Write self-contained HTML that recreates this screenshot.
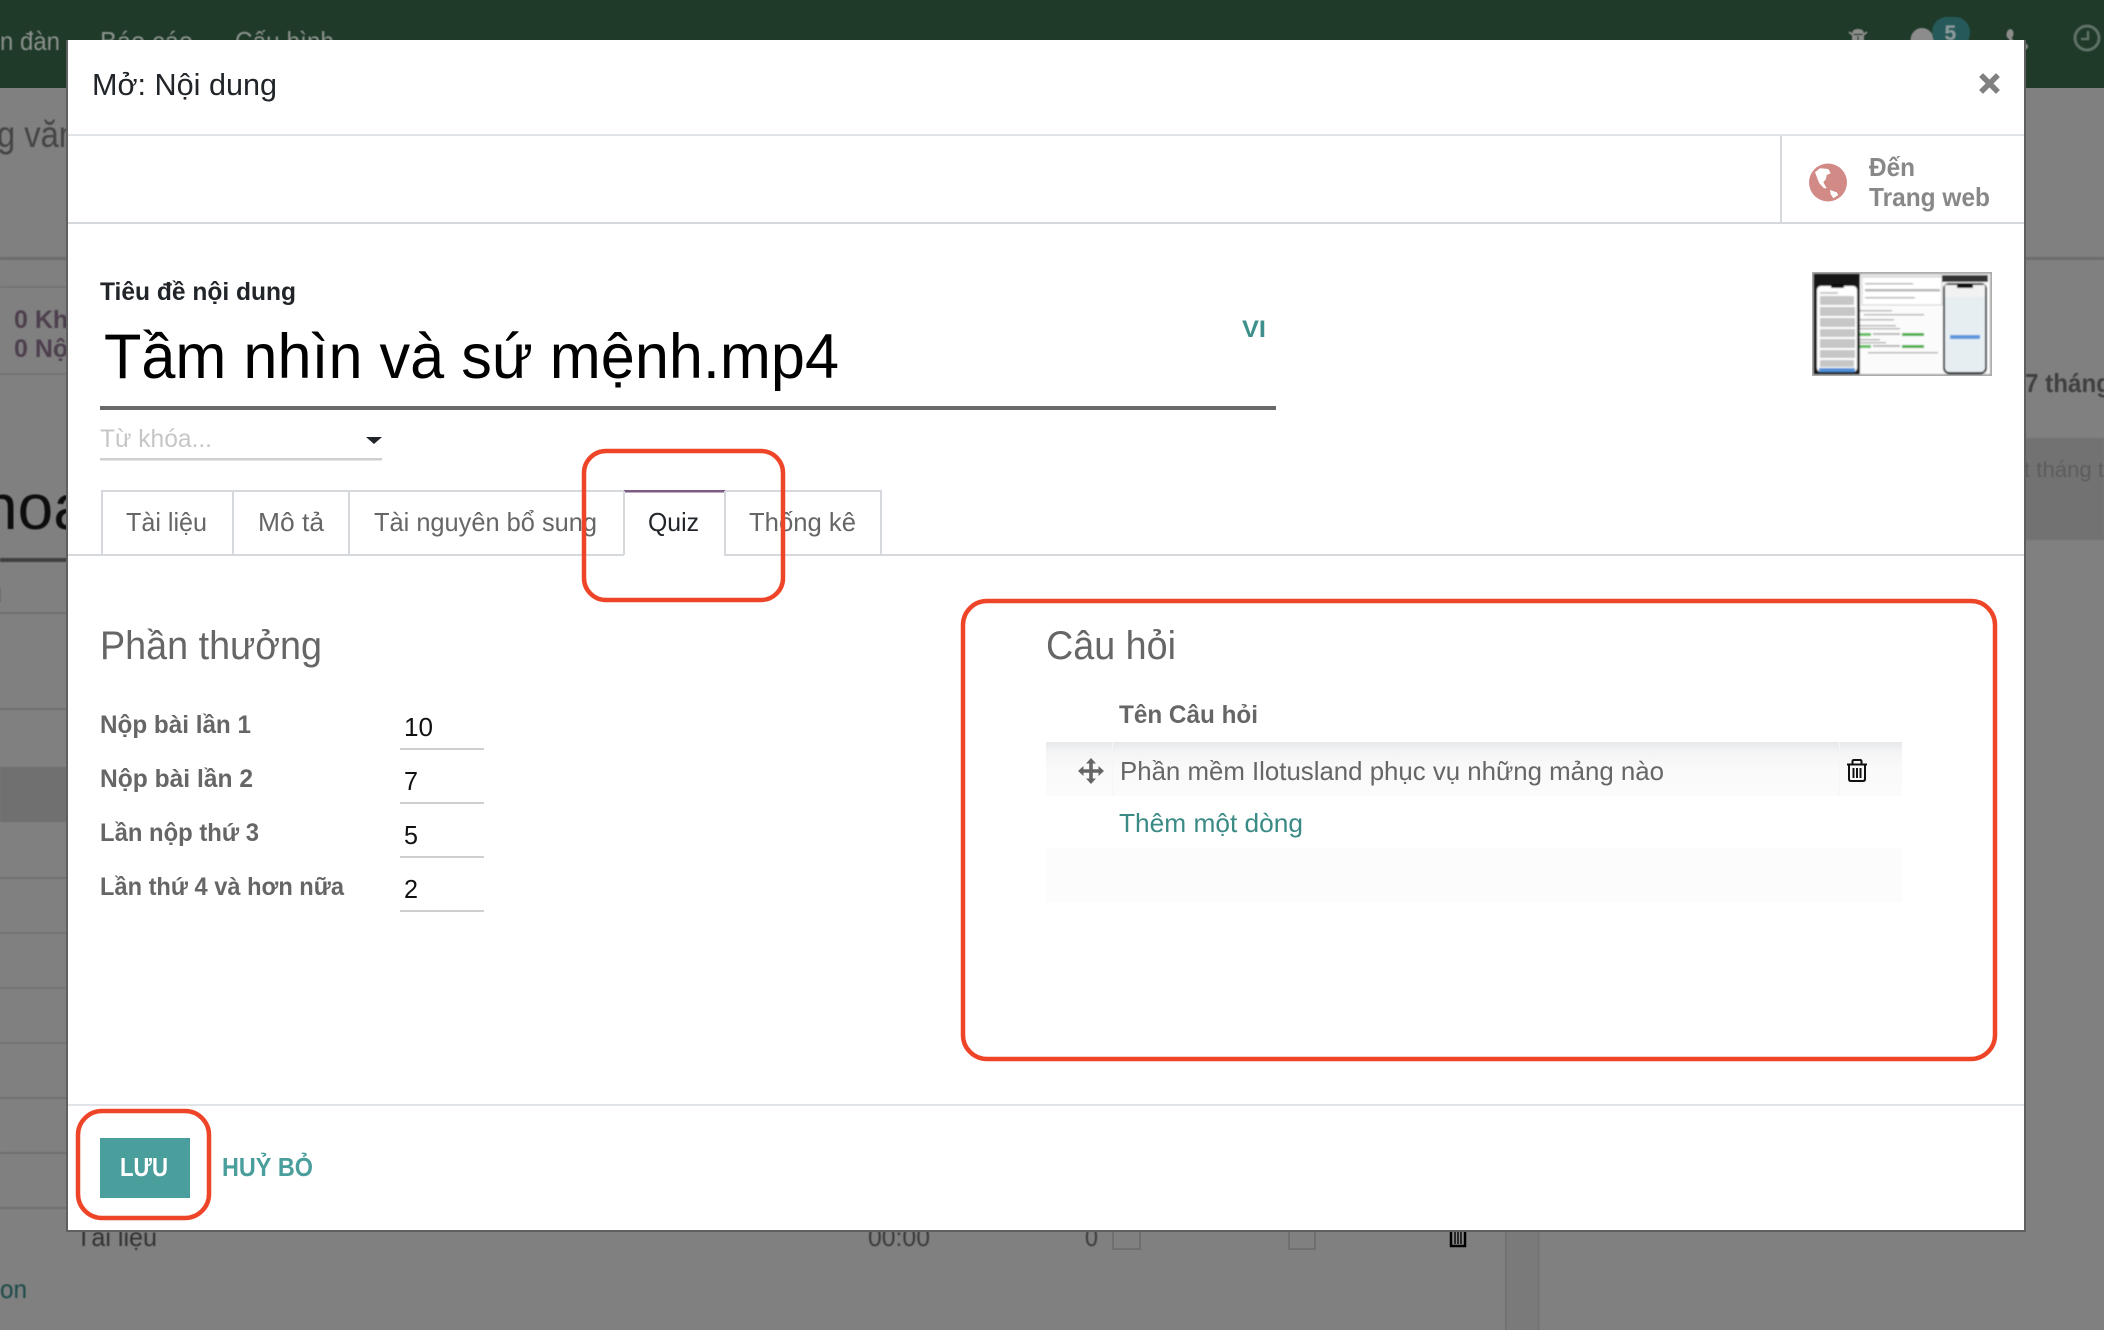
<!DOCTYPE html>
<html lang="vi"><head><meta charset="utf-8"><title>Mở: Nội dung</title>
<style>
html,body{margin:0;padding:0;width:2104px;height:1330px;overflow:hidden;background:#808080}
svg{display:block;position:absolute;left:0;top:0}
text{font-family:"Liberation Sans","Noto Sans CJK SC",sans-serif}
.b{font-weight:700}
</style></head><body>
<svg width="2104" height="1330" viewBox="0 0 2104 1330" xmlns="http://www.w3.org/2000/svg">
<defs>
<linearGradient id="rowg" x1="0" y1="0" x2="0" y2="1"><stop offset="0" stop-color="#e6e8ea"/><stop offset=".18" stop-color="#f4f4f5"/><stop offset=".5" stop-color="#fafafa"/><stop offset="1" stop-color="#fbfbfb"/></linearGradient>
<filter id="bl" x="-5%" y="-5%" width="110%" height="110%"><feGaussianBlur stdDeviation="0.5"/></filter>
<filter id="bl2" x="-5%" y="-5%" width="110%" height="110%"><feGaussianBlur stdDeviation="0.9"/></filter>
</defs>

<!-- dimmed backdrop -->
<rect width="2104" height="1330" fill="#808080"/>
<rect width="2104" height="88" fill="#1f3a28"/>
<g filter="url(#bl)">
<text x="0" y="50" font-size="26" fill="#8b918d" textLength="60" lengthAdjust="spacingAndGlyphs">n đàn</text>
<text x="100" y="50" font-size="26" fill="#8b918d" textLength="93" lengthAdjust="spacingAndGlyphs">Báo cáo</text>
<text x="235" y="50" font-size="26" fill="#8b918d" textLength="99" lengthAdjust="spacingAndGlyphs">Cấu hình</text>
<!-- top right icons -->
<path d="M1852 34Q1852 29 1858 29Q1864 29 1864 34Z" fill="#8c8c8c"/>
<path d="M1849 32l5 4M1867 32l-5 4" stroke="#8c8c8c" stroke-width="1.8" fill="none"/>
<path d="M1852 35H1864V44H1852Z" fill="#8c8c8c"/>
<path d="M1858 36V44" stroke="#1f3a28" stroke-width="1.2"/>
<ellipse cx="1922" cy="40" rx="11.5" ry="12" fill="#8c8c8c"/>
<rect x="1932" y="17" width="38" height="31" rx="15" fill="#265a5a"/>
<text x="1944.5" y="40" font-size="21" class="b" fill="#8a9a9a">5</text>
<ellipse cx="2010" cy="34" rx="3.5" ry="5" fill="#8c8c8c" transform="rotate(10 2010 34)"/>
<path d="M2010 38Q2013 44 2018 44" stroke="#8c8c8c" stroke-width="3" fill="none"/>
<circle cx="2025" cy="46.5" r="3" fill="#8c8c8c"/>
<circle cx="2087" cy="38" r="12" fill="none" stroke="#5f7166" stroke-width="3"/>
<path d="M2088 31v8h-7" fill="none" stroke="#5f7166" stroke-width="2.5"/>
</g>

<g filter="url(#bl)">
<text x="-3" y="147" font-size="37" fill="#444" textLength="80" lengthAdjust="spacingAndGlyphs">g văn</text>
<rect x="0" y="257" width="68" height="3" fill="#6c6c6c"/>
<rect x="0" y="286" width="68" height="2" fill="#737373"/>
<rect x="0" y="373" width="68" height="2" fill="#737373"/>
<text x="14" y="328" font-size="25" class="b" fill="#4d414d">0 Kh</text>
<text x="14" y="357" font-size="25" class="b" fill="#4d414d">0 Nộ</text>
<text x="-18" y="529" font-size="64" fill="#111">hoa</text>
<rect x="0" y="558" width="68" height="4" fill="#404040"/>
<text x="-12" y="602" font-size="26" fill="#666">u</text>
<rect x="0" y="612" width="68" height="2" fill="#707070"/>
<rect x="0" y="708" width="68" height="2" fill="#707070"/>
<rect x="0" y="767" width="68" height="55" fill="#6f6f6f"/>
<rect x="0" y="877" width="68" height="2" fill="#707070"/>
<rect x="0" y="932" width="68" height="2" fill="#747474"/>
<rect x="0" y="987" width="68" height="2" fill="#747474"/>
<rect x="0" y="1042" width="68" height="2" fill="#747474"/>
<rect x="0" y="1097" width="68" height="2" fill="#707070"/>
<rect x="0" y="1152" width="68" height="2" fill="#707070"/>
<rect x="0" y="1207" width="68" height="2" fill="#707070"/>
<!-- right of modal -->
<rect x="2024" y="257" width="80" height="3" fill="#6c6c6c"/>
<text x="2025" y="392" font-size="26" class="b" fill="#404040" textLength="86" lengthAdjust="spacingAndGlyphs">7 tháng</text>
<rect x="2024" y="438" width="80" height="102" fill="#727272"/>
<text x="2024" y="477" font-size="22" fill="#5c5c5c" textLength="80" lengthAdjust="spacingAndGlyphs">t tháng t</text>
<!-- below modal -->
<text x="76" y="1246" font-size="26" fill="#333" textLength="81" lengthAdjust="spacingAndGlyphs">Tài liệu</text>
<text x="868" y="1246" font-size="26" fill="#3a3a3a" textLength="62" lengthAdjust="spacingAndGlyphs">00:00</text>
<text x="1085" y="1246" font-size="26" fill="#3a3a3a" textLength="13" lengthAdjust="spacingAndGlyphs">0</text>
<text x="0" y="1298" font-size="26" fill="#1c4a48" textLength="27" lengthAdjust="spacingAndGlyphs">on</text>
</g>
<rect x="1113" y="1225" width="27" height="24" fill="#808080" stroke="#6f6f6f" stroke-width="2"/>
<rect x="1289" y="1225" width="26" height="24" fill="#808080" stroke="#6f6f6f" stroke-width="2"/>
<rect x="1451" y="1228" width="14" height="18" fill="#8a8a8a" stroke="#000" stroke-width="2.5"/>
<path d="M1455 1232v12M1458 1232v12M1461 1232v12" stroke="#000" stroke-width="1.4"/>
<rect x="1505" y="1230" width="34" height="100" fill="#7a7a7a"/>
<rect x="1505" y="1230" width="1.5" height="100" fill="#6f6f6f"/>
<rect x="1538" y="1230" width="1.5" height="100" fill="#727272"/>

<!-- modal -->
<rect x="66" y="40" width="1960" height="1192" fill="#5f5f5f"/>
<rect x="68" y="40" width="1956" height="1190" fill="#fff"/>

<text x="92" y="95" font-size="31" fill="#212529" textLength="185" lengthAdjust="spacingAndGlyphs">Mở: Nội dung</text>
<path d="M1983 77l13 13M1996 77l-13 13" stroke="#808080" stroke-width="5.5" stroke-linecap="square" fill="none"/>
<rect x="68" y="134" width="1956" height="2" fill="#e0e3e7"/>
<rect x="68" y="222" width="1956" height="2" fill="#d5d9de"/>
<rect x="1780" y="136" width="2" height="86" fill="#d5d9de"/>

<!-- globe -->
<circle cx="1828" cy="182.5" r="19" fill="#d18a86"/>
<path d="M1815 172.3L1820 168.3L1828.3 169L1830.7 173.3L1826.7 175L1826 179L1823.3 182.3L1826.7 188.3L1824 188.3L1819.3 183.3L1816.7 176.7ZM1830 190L1836.7 192.3L1838.3 195L1833.3 198.3L1830.7 194.3Z" fill="#fff"/>

<text x="1869" y="176" font-size="26" class="b" fill="#888" textLength="46" lengthAdjust="spacingAndGlyphs">Đến</text>
<text x="1869" y="206" font-size="26" class="b" fill="#888" textLength="121" lengthAdjust="spacingAndGlyphs">Trang web</text>

<!-- title -->
<text x="100" y="300" font-size="25" class="b" fill="#212529" textLength="196" lengthAdjust="spacingAndGlyphs">Tiêu đề nội dung</text>
<text x="104" y="378" font-size="63" fill="#000" textLength="735" lengthAdjust="spacingAndGlyphs">Tầm nhìn và sứ mệnh.mp4</text>
<text x="1242" y="337" font-size="24" class="b" fill="#3f908c" textLength="24" lengthAdjust="spacingAndGlyphs">VI</text>
<rect x="100" y="406" width="1176" height="4" fill="#6a6a6a"/>

<!-- thumbnail -->
<rect x="1812" y="272" width="180" height="104" fill="#aaa"/>
<g filter="url(#bl2)">
<rect x="1814" y="274" width="176" height="100" fill="#fbfbfb"/>
<rect x="1814" y="274" width="46" height="100" fill="#161616"/>
<rect x="1817" y="286" width="40" height="86" rx="4" fill="#fff"/>
<rect x="1831" y="284" width="13" height="4" fill="#111"/>
<g fill="#c6c6c6">
<rect x="1820" y="292" width="18" height="2"/><rect x="1820" y="296" width="34" height="9"/><rect x="1820" y="307" width="35" height="9"/><rect x="1820" y="318" width="35" height="9"/><rect x="1820" y="329" width="35" height="8"/><rect x="1820" y="339" width="35" height="9"/><rect x="1820" y="350" width="35" height="8"/><rect x="1820" y="360" width="34" height="7"/>
</g>
<rect x="1819" y="368" width="36" height="4" fill="#4f8fd8"/>
<rect x="1860" y="274" width="82" height="3" fill="#e5e5e5"/>
<rect x="1862" y="277" width="80" height="28" fill="#fff" stroke="#ccc"/>
<g fill="#b5b5b5">
<rect x="1865" y="283" width="48" height="1.5"/><rect x="1865" y="289" width="75" height="2.5"/><rect x="1865" y="297" width="50" height="1.5"/>
<rect x="1860" y="310" width="32" height="1.5"/><rect x="1864" y="314" width="60" height="1.5"/><rect x="1860" y="319" width="34" height="1.5"/><rect x="1860" y="325" width="36" height="1.5"/><rect x="1860" y="328" width="40" height="1.5"/>
<rect x="1873" y="333" width="27" height="2"/><rect x="1873" y="345" width="27" height="2"/>
<rect x="1860" y="339" width="20" height="1.5"/><rect x="1860" y="342" width="26" height="1.5"/><rect x="1868" y="352" width="70" height="1.5"/>
</g>
<rect x="1860" y="333" width="11" height="3" fill="#5cbf5c"/>
<rect x="1902" y="333" width="22" height="3" fill="#3fae3a"/>
<rect x="1860" y="345" width="11" height="3" fill="#5cbf5c"/>
<rect x="1902" y="345" width="22" height="3" fill="#3fae3a"/>
<rect x="1942" y="275" width="46" height="7" fill="#333"/>
<rect x="1943" y="283" width="44" height="91" rx="6" fill="#1d1d1d"/>
<rect x="1945" y="285" width="40" height="87" rx="4" fill="#e6eef2"/>
<rect x="1945" y="285" width="40" height="12" fill="#f2f2f2"/>
<rect x="1957" y="284" width="16" height="4" fill="#111"/>
<rect x="1950" y="335" width="30" height="4" fill="#5b96dc"/>
</g>

<!-- tags -->
<text x="100" y="447" font-size="25" fill="#c6c6c6" textLength="112" lengthAdjust="spacingAndGlyphs">Từ khóa...</text>
<path d="M366 437h16l-8 7z" fill="#212529"/>
<rect x="100" y="458" width="282" height="2.5" fill="#cfcfcf"/>

<!-- tabs -->
<g fill="none" stroke="#d5d9de" stroke-width="2">
<path d="M68 555H624M725 555H2024"/>
<path d="M102 555V491H881V555"/>
<path d="M233 491V555M349 491V555M624 491V555M725 491V555"/>
</g>
<rect x="625" y="490" width="100" height="66" fill="#fff"/>
<rect x="624" y="490" width="101" height="2.5" fill="#7c5b85"/>
<path d="M624 491V555M725 491V556" stroke="#d5d9de" stroke-width="2"/>
<text x="126" y="531" font-size="26" fill="#666" textLength="81" lengthAdjust="spacingAndGlyphs">Tài liệu</text>
<text x="258" y="531" font-size="26" fill="#666" textLength="66" lengthAdjust="spacingAndGlyphs">Mô tả</text>
<text x="374" y="531" font-size="26" fill="#666" textLength="223" lengthAdjust="spacingAndGlyphs">Tài nguyên bổ sung</text>
<text x="648" y="531" font-size="26" fill="#212529" textLength="51" lengthAdjust="spacingAndGlyphs">Quiz</text>
<text x="749" y="531" font-size="26" fill="#666" textLength="107" lengthAdjust="spacingAndGlyphs">Thống kê</text>

<!-- left group -->
<text x="100" y="659" font-size="40" fill="#666" textLength="222" lengthAdjust="spacingAndGlyphs">Phần thưởng</text>
<g class="b" font-weight="700" font-size="25" fill="#666">
<text x="100" y="733" textLength="151" lengthAdjust="spacingAndGlyphs">Nộp bài lần 1</text>
<text x="100" y="787" textLength="153" lengthAdjust="spacingAndGlyphs">Nộp bài lần 2</text>
<text x="100" y="841" textLength="159" lengthAdjust="spacingAndGlyphs">Lần nộp thứ 3</text>
<text x="100" y="895" textLength="244" lengthAdjust="spacingAndGlyphs">Lần thứ 4 và hơn nữa</text>
</g>
<g font-size="26" fill="#111">
<text x="404" y="736" textLength="29" lengthAdjust="spacingAndGlyphs">10</text>
<text x="404" y="790" textLength="14" lengthAdjust="spacingAndGlyphs">7</text>
<text x="404" y="844" textLength="14" lengthAdjust="spacingAndGlyphs">5</text>
<text x="404" y="898" textLength="14" lengthAdjust="spacingAndGlyphs">2</text>
</g>
<g fill="#cfcfcf">
<rect x="400" y="748" width="84" height="2"/><rect x="400" y="802" width="84" height="2"/><rect x="400" y="856" width="84" height="2"/><rect x="400" y="910" width="84" height="2"/>
</g>

<!-- right group -->
<text x="1046" y="659" font-size="40" fill="#666" textLength="130" lengthAdjust="spacingAndGlyphs">Câu hỏi</text>
<text x="1119" y="723" font-size="25" class="b" fill="#666" textLength="139" lengthAdjust="spacingAndGlyphs">Tên Câu hỏi</text>
<rect x="1046" y="742" width="856" height="54" fill="url(#rowg)"/>
<rect x="1112" y="742" width="1" height="54" fill="#f6f6f6"/>
<rect x="1839" y="742" width="1" height="54" fill="#f6f6f6"/>
<path transform="translate(1091 771)" d="M0-13L5-7.5H1.8V-1.8H7.5V-5L13 0L7.5 5V1.8H1.8V7.5H5L0 13L-5 7.5H-1.8V1.8H-7.5V5L-13 0L-7.5-5V-1.8H-1.8V-7.5H-5Z" fill="#666"/>
<text x="1120" y="780" font-size="26" fill="#666" textLength="544" lengthAdjust="spacingAndGlyphs">Phần mềm Ilotusland phục vụ những mảng nào</text>
<g fill="none" stroke="#111" stroke-width="2">
<path d="M1847 764.5H1867"/>
<path d="M1852.5 764V761.5Q1852.5 760 1854 760H1860Q1861.5 760 1861.5 761.5V764"/>
<path d="M1849 765V779Q1849 781 1851 781H1863Q1865 781 1865 779V765"/>
<path d="M1853.5 768V778M1857 768V778M1860.5 768V778"/>
</g>
<text x="1119" y="832" font-size="26" fill="#3a8a85" textLength="184" lengthAdjust="spacingAndGlyphs">Thêm một dòng</text>
<rect x="1046" y="848" width="856" height="54" fill="#fcfcfc"/>

<!-- footer -->
<rect x="68" y="1104" width="1956" height="2" fill="#e0e3e7"/>
<rect x="100" y="1138" width="90" height="60" fill="#4a9e9c"/>
<text x="120" y="1176" font-size="26" class="b" fill="#fff" textLength="48" lengthAdjust="spacingAndGlyphs">LƯU</text>
<text x="222" y="1176" font-size="26" class="b" fill="#4a9e9c" textLength="91" lengthAdjust="spacingAndGlyphs">HUỶ BỎ</text>

<!-- annotations -->
<g fill="none" stroke="#ee4428" stroke-width="4.5">
<rect x="584" y="451" width="199" height="149" rx="22"/>
<rect x="963" y="601" width="1032" height="458" rx="24"/>
<rect x="78" y="1111" width="131" height="107" rx="24"/>
</g>
</svg>
</body></html>
